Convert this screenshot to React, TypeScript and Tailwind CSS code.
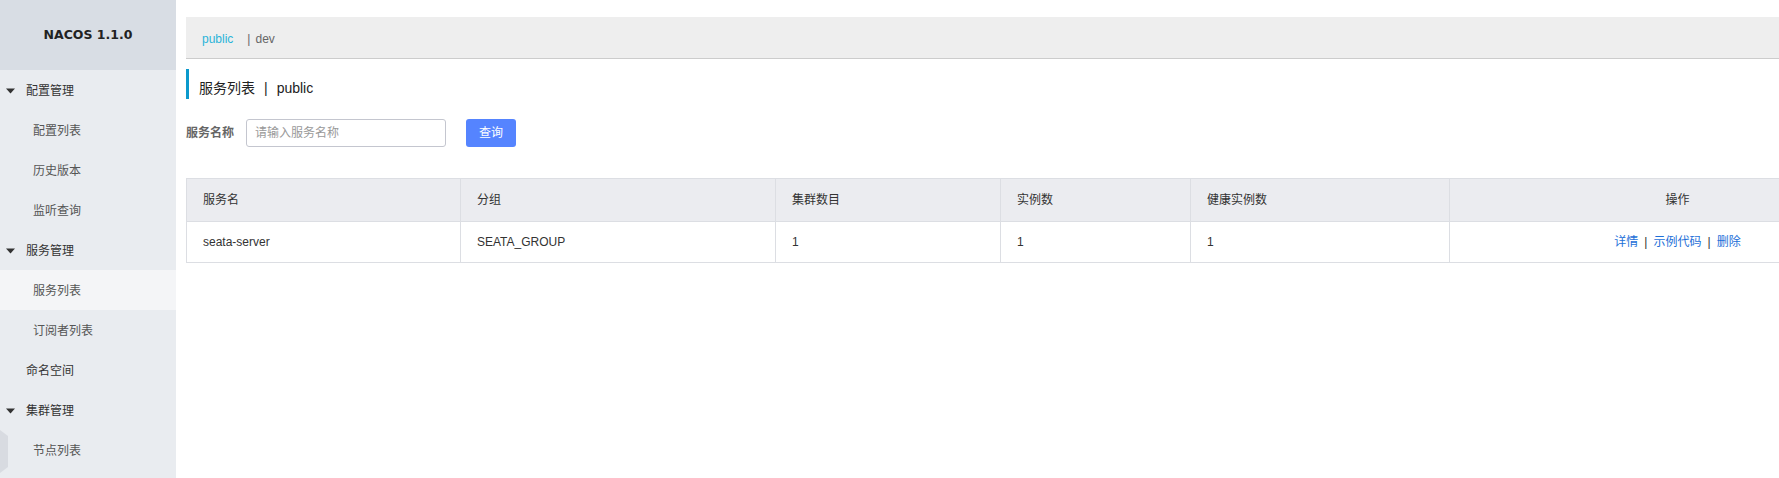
import React from 'react';

const FONT = { fontFamily: '"Liberation Sans", "Noto Sans CJK SC", sans-serif' };

type MenuItem = { label: string; level: 0 | 1; group?: boolean; active?: boolean };

const menu: MenuItem[] = [
  { label: '配置管理', level: 0, group: true },
  { label: '配置列表', level: 1 },
  { label: '历史版本', level: 1 },
  { label: '监听查询', level: 1 },
  { label: '服务管理', level: 0, group: true },
  { label: '服务列表', level: 1, active: true },
  { label: '订阅者列表', level: 1 },
  { label: '命名空间', level: 0 },
  { label: '集群管理', level: 0, group: true },
  { label: '节点列表', level: 1 },
];

const columns = [
  { title: '服务名', width: 'w-[274px]' },
  { title: '分组', width: 'w-[315px]' },
  { title: '集群数目', width: 'w-[225px]' },
  { title: '实例数', width: 'w-[190px]' },
  { title: '健康实例数', width: 'w-[259px]' },
];

const rows = [{ name: 'seata-server', group: 'SEATA_GROUP', clusters: 1, instances: 1, healthy: 1 }];

function Caret() {
  return (
    <svg width="9" height="6" viewBox="0 0 9 6" className="shrink-0">
      <path d="M0 0.5 H9 L4.5 5.5 Z" fill="#333" />
    </svg>
  );
}

function Sidebar() {
  return (
    <aside className="relative h-full w-[176px] shrink-0 bg-[#e9ecf0]">
      <div className="flex h-[70px] items-center justify-center bg-[#d8dde4]">
        <span
          className="text-[12.5px] font-bold text-[#222]"
          style={{ fontFamily: '"DejaVu Sans", Verdana, sans-serif' }}
        >
          NACOS 1.1.0
        </span>
      </div>
      <ul>
        {menu.map((item) => (
          <li
            key={item.label}
            className={`flex h-[40px] items-center pt-[2px] text-[12px] leading-[16px] ${
              item.active ? 'bg-[#f4f5f7]' : ''
            } ${item.level === 1 ? 'pl-[33px] text-[#555]' : 'text-[#333]'} ${
              item.level === 0 && item.group ? 'gap-[11px] pl-[6px]' : ''
            } ${item.level === 0 && !item.group ? 'pl-[26px]' : ''}`}
          >
            {item.group ? <Caret /> : null}
            <span>{item.label}</span>
          </li>
        ))}
      </ul>
      <svg width="9" height="44" viewBox="0 0 9 44" className="absolute left-0 top-[430px]">
        <path d="M0 0 L8 6 V37 L0 43 Z" fill="#d8dbe1" />
      </svg>
    </aside>
  );
}

export default function App() {
  return (
    <div className="flex h-[478px] w-full overflow-hidden bg-white" style={FONT}>
      <Sidebar />
      <main className="min-w-0 flex-1 overflow-hidden pl-[10px] pt-[17px]">
        <div className="flex h-[42px] w-[1720px] items-center border-b border-[#cccccc] bg-[#eeeeee] pl-[16px] pt-[2px] text-[12px] leading-[16px]">
          <span className="text-[#2bb4d9]">public</span>
          <span className="ml-[14px] text-[#666]">|</span>
          <span className="ml-[5px] text-[#666]">dev</span>
        </div>

        <div className="mt-[10px] h-[30px] border-l-[3px] border-[#0b99cc] pl-[10px] pt-[9px] text-[14px] leading-[20px] text-[#222]">
          服务列表<span className="mx-[9px]">|</span>public
        </div>

        <div className="mt-[20px] flex items-center">
          <span className="w-[48px] text-[12px] font-bold text-[#666]">服务名称</span>
          <div className="ml-[12px] flex h-[28px] w-[200px] items-center rounded-[3px] border border-[#c4c6cf] px-[8px] text-[12px] text-[#999]">
            请输入服务名称
          </div>
          <button
            type="button"
            className="ml-[20px] h-[28px] w-[50px] rounded-[3px] bg-[#5584ff] text-[12px] text-white"
          >
            查询
          </button>
        </div>

        <table className="mt-[31px] w-[1720px] table-fixed border-collapse text-[12px] text-[#333]">
          <thead>
            <tr className="h-[43px] bg-[#ebecf0]">
              {columns.map((c) => (
                <th
                  key={c.title}
                  className={`${c.width} border border-[#dcdee3] px-[16px] text-left font-normal`}
                >
                  {c.title}
                </th>
              ))}
              <th className="border border-[#dcdee3] px-[16px] text-center font-normal">操作</th>
            </tr>
          </thead>
          <tbody>
            {rows.map((r) => (
              <tr key={r.name} className="h-[41px]">
                <td className="border border-[#dcdee3] px-[16px]">{r.name}</td>
                <td className="border border-[#dcdee3] px-[16px]">{r.group}</td>
                <td className="border border-[#dcdee3] px-[16px]">{r.clusters}</td>
                <td className="border border-[#dcdee3] px-[16px]">{r.instances}</td>
                <td className="border border-[#dcdee3] px-[16px]">{r.healthy}</td>
                <td className="border border-[#dcdee3] px-[16px] text-center">
                  <a className="text-[#1d6fd8]">详情</a>
                  <span className="mx-[6px] text-[#333]">|</span>
                  <a className="text-[#1d6fd8]">示例代码</a>
                  <span className="mx-[6px] text-[#333]">|</span>
                  <a className="text-[#1d6fd8]">删除</a>
                </td>
              </tr>
            ))}
          </tbody>
        </table>
      </main>
    </div>
  );
}
